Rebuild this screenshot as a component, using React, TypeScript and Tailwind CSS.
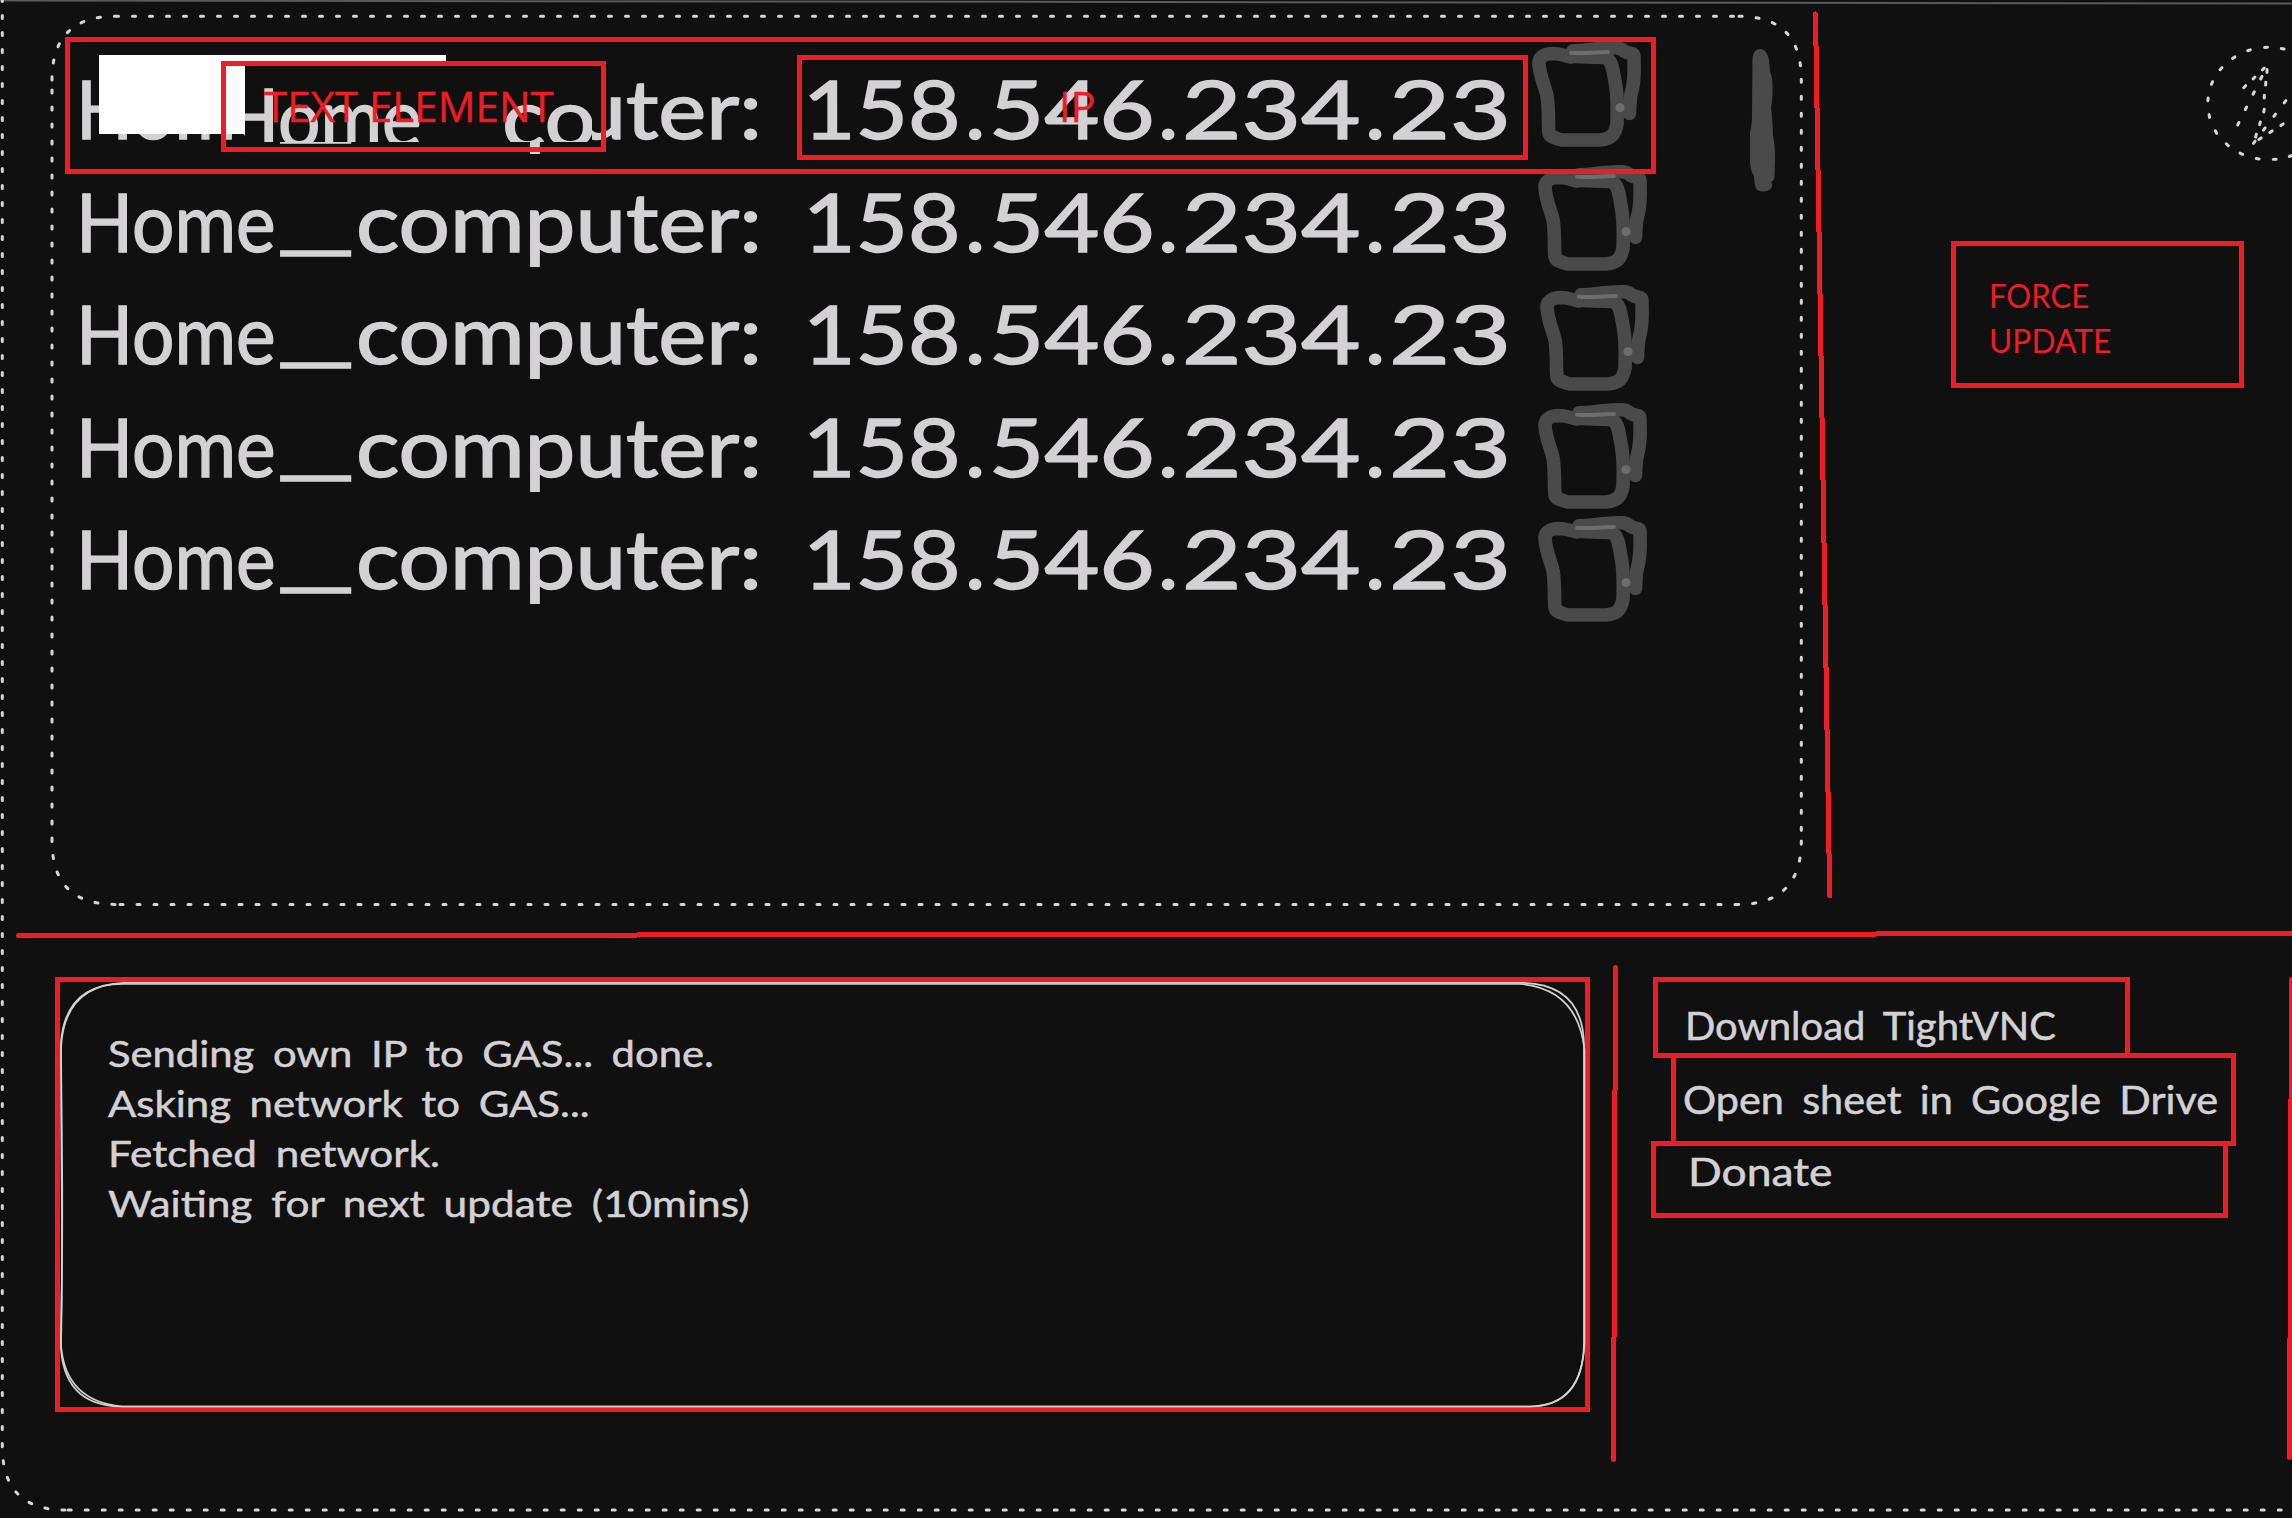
import { useLayoutEffect, useRef, useState } from "react";
import type { ReactNode } from "react";

/** Text stretched or squeezed horizontally so that it fills a given width. */
function Fit({ width, className = "", children }: { width: number; className?: string; children: ReactNode }) {
  const ref = useRef<HTMLSpanElement>(null);
  const [scale, setScale] = useState(1);
  useLayoutEffect(() => {
    if (ref.current) setScale(width / ref.current.offsetWidth);
  }, [width]);
  return (
    <span className={`block whitespace-pre ${className}`} style={{ width }}>
      <span ref={ref} className="inline-block origin-left" style={{ transform: `scaleX(${scale})` }}>
        {children}
      </span>
    </span>
  );
}

function HostName() {
  return (
    <span className="flex shrink-0">
      <Fit width={200}>Home</Fit>
      <Fit width={80}><span className="relative -top-2">_</span></Fit>
      <Fit width={406}>computer:</Fit>
    </span>
  );
}

const ipWidths = [158, 166, 179, 122];

function Address({ ip }: { ip: string }) {
  return (
    <span className="ml-[41px] flex w-[708px] shrink-0 justify-between">
      {ip.split(".").map((part, i) => (
        <span key={i} className="flex gap-1">
          {i > 0 && <Fit width={20}>.</Fit>}
          <Fit width={ipWidths[i]}>{part}</Fit>
        </span>
      ))}
    </span>
  );
}

function ScribbleBox({ shift }: { shift: string }) {
  return (
    <svg className={`h-[112px] w-[130px] shrink-0 overflow-visible ${shift}`} viewBox="1530 51 130 112" fill="none" strokeLinecap="round" strokeLinejoin="round">
      <g stroke="#4a4a4a" strokeWidth="13.6">
        <path d="M1571 57C1560 55 1562 53.500 1552 53.500C1543 54 1539 58 1539 63C1539.500 78 1547 90 1547.500 99C1549 112 1548 125 1549 133C1550 137 1555 138 1562 140L1600 140C1611 139 1615 135 1617 124C1617.500 110 1618 98 1615.500 84C1613 72 1613 60 1605 57.500C1595 57 1585 57.500 1571 56" />
        <path d="M1573 50.800C1590 50.500 1586 49 1600 48.500C1612 48 1618 46 1624 51C1630 55 1634 51 1634 57C1634 70 1635 76 1632.500 88C1629 100 1630 104 1629.500 113.500" />
      </g>
      <path d="M1571 52.700C1585 54 1592 52 1608 52" stroke="#6d6d6d" strokeWidth="4" />
      <ellipse cx="1620" cy="107.700" rx="4.600" ry="4.400" fill="#6d6d6d" />
    </svg>
  );
}

const hosts = [
  { ip: "158.546.234.23", shift: "" },
  { ip: "158.546.234.23", shift: "translate-x-[6px] translate-y-[11px]" },
  { ip: "158.546.234.23", shift: "translate-x-[8px] translate-y-[19px]" },
  { ip: "158.546.234.23", shift: "translate-x-[6px] translate-y-[24px]" },
  { ip: "158.546.234.23", shift: "translate-x-[6px] translate-y-[25px]" },
];

const log = [
  { text: "Sending own IP to GAS... done.", width: 606 },
  { text: "Asking network to GAS...", width: 482 },
  { text: "Fetched network.", width: 332 },
  { text: "Waiting for next update (10mins)", width: 642 },
];

// Dashes of the round button: x, y and direction in degrees.
const dashes: [number, number, number][] = [
  [2208, 99.3, 95], [2212, 83, 115], [2221, 68.7, 133], [2233.7, 57.7, 145], [2249, 50.3, 160], [2266, 47.3, 176], [2282.7, 48.7, 10],
  [2209.3, 116, 80], [2216, 132, 62], [2227.3, 144.7, 44], [2241.3, 153.7, 25], [2257.7, 158.7, 8], [2274.7, 159.3, 177], [2290.7, 156, 160],
  [2263.3, 69, 133], [2254, 78, 133], [2244.7, 86.7, 133],
  [2267, 71, 92], [2265.7, 83.7, 94], [2264.3, 96.7, 92], [2264, 110.7, 100], [2260, 123.3, 104], [2256, 135.7, 103],
  [2261.3, 77.7, 117], [2253.7, 93, 117], [2246, 108.3, 117], [2238.3, 123.7, 117],
  [2285, 101.7, 127], [2274.7, 115.3, 127], [2264.3, 129, 127], [2254.3, 142.3, 127],
  [2282, 124.7, 147], [2271, 131.7, 147], [2260, 138.7, 147],
];

function DashedButton() {
  return (
    <svg className="absolute top-[40px] left-[2200px] h-[128px] w-[92px]" viewBox="2200 40 92 128" stroke="#d6d6d6" strokeWidth="3" strokeLinecap="round">
      {dashes.map(([x, y, a], i) => {
        const dx = 1.4 * Math.cos((a * Math.PI) / 180);
        const dy = 1.4 * Math.sin((a * Math.PI) / 180);
        return <line key={i} x1={x - dx} y1={y - dy} x2={x + dx} y2={y + dy} />;
      })}
    </svg>
  );
}

export default function App() {
  return (
    <div className="relative flex h-[1518px] w-[2292px] flex-col overflow-hidden bg-[#101010] font-['Lato',sans-serif] text-[#d3d1d4]">
      <svg className="pointer-events-none absolute inset-0 h-full w-full" viewBox="0 0 2292 1518" fill="none">
        <path d="M0 0.500L760 1.500L2292 3.500" stroke="#5b5b5b" strokeWidth="2" />
        <path
          d="M2298.200 1510H65M65 1510Q2.300 1510 2.300 1446.500M2.300 1446.500V-20"
          stroke="#d6d6d6" strokeWidth="3" strokeLinecap="round" strokeDasharray="3 14"
        />
      </svg>

      <section className="flex h-[931px] shrink-0">
        <div className="relative mt-4 ml-[52px] h-[888px] w-[1749px] shrink-0 pt-[35px] pl-6">
          <svg className="pointer-events-none absolute inset-0 h-full w-full overflow-visible" viewBox="52 16 1749 888" fill="none" stroke="#d6d6d6" strokeWidth="3" strokeLinecap="round" strokeDasharray="3 14">
            <path d="M115.500 16.300H1738M1739 16.300Q1801.300 16.300 1801.300 79.300M1801.300 79.300V841M1801.300 841Q1801.300 904.400 1738 904.400M1738 904.400H115M115 904.400Q52 904.400 52 841M52 841V79M52 80Q52 16.300 115 16.300" />
          </svg>
          <ul className="text-[82px] leading-[112px] [-webkit-text-stroke:1.5px_#d3d1d4]">
            {hosts.map((host, i) => (
              <li key={i} className="relative flex h-[112.5px]">
                <HostName />
                {i === 0 && (
                  <>
                    <div className="absolute top-1 left-[23px] h-[79px] w-[347px] bg-white" />
                    <div className="absolute top-3 left-[169px] flex h-[79px] w-[347px] overflow-hidden bg-[#101010]" aria-hidden="true">
                      <div className="-mt-1 -ml-[23px]"><HostName /></div>
                    </div>
                  </>
                )}
                <Address ip={host.ip} />
                <div className="ml-[19px]"><ScribbleBox shift={host.shift} /></div>
              </li>
            ))}
          </ul>
          <svg className="absolute top-[33px] right-[25px] h-[143px] w-[28px]" viewBox="1748 49 28 143" fill="#4a4a4a">
            <path d="M1752.500 58Q1753 49 1761 49Q1767 50 1769 60L1770 72Q1773 76 1772.500 95Q1772 103 1771 108Q1772.500 118 1773 135Q1775 145 1775 160L1774.500 177Q1774 181 1771 182Q1774 187 1769 190Q1764 193 1757 190Q1754 185 1754 176Q1750 170 1750 160L1750 132Q1752 125 1752 115Z" />
          </svg>

          <div className="absolute top-[21px] left-[13px] h-[137px] w-[1591px] border-[5px] border-[#ee1c24]" />
          <div className="absolute top-[45px] left-[169px] h-[91px] w-[385px] border-[5px] border-[#ee1c24] pt-2 pl-[38px] font-['Open_Sans',sans-serif] text-[41.5px] leading-[64px] text-[#ee1c24] [-webkit-text-stroke:0.4px_#ee1c24]">
            <Fit width={290}>TEXT ELEMENT</Fit>
          </div>
          <div className="absolute top-[39px] left-[745px] flex h-[105px] w-[731px] justify-center border-[5px] border-[#ee1c24] pt-[14px] pr-[170px] font-['Open_Sans',sans-serif] text-[41.5px] leading-[64px] text-[#ee1c24] [-webkit-text-stroke:0.4px_#ee1c24]">
            <Fit width={37}>IP</Fit>
          </div>
        </div>

        <svg className="h-[900px] w-[40px] shrink-0 overflow-visible" viewBox="1801 0 40 900" shapeRendering="crispEdges">
          <path d="M1815.500 14L1829.700 896" stroke="#ee1c24" strokeWidth="5" strokeLinecap="round" />
        </svg>

        <button className="mt-[241px] ml-[110px] flex h-[147px] w-[293px] flex-col items-start border-[5px] border-[#ee1c24] pt-[27px] pl-[33px] text-[32px] leading-[45px] text-[#ee1c24]">
          <Fit width={100}>FORCE</Fit>
          <Fit width={122}>UPDATE</Fit>
        </button>
        <DashedButton />
      </section>

      <div className="flex h-[7px] shrink-0 items-start pl-4">
        <div className="mt-[2px] h-[5px] w-[621px] rounded-l-sm bg-[#ee1c24]" />
        <div className="mt-px h-[5px] w-[1239px] bg-[#ee1c24]" />
        <div className="h-[5px] flex-1 bg-[#ee1c24]" />
      </div>

      <section className="flex items-start">
        <div className="relative mt-[39px] ml-[55px] h-[435px] w-[1535px] shrink-0 border-[5px] border-[#ee1c24] pt-[46px] pl-12 text-[37px] leading-[50px]">
          <svg className="pointer-events-none absolute inset-0 h-full w-full overflow-visible" viewBox="60 982 1525 425" fill="none" stroke="#d3d1d4" strokeWidth="1.700">
            <path d="M124 982.800H1520Q1583.500 983 1584 1046V1343Q1583 1406 1530 1406.500H120Q62 1405 60.800 1343C61.500 1290 63 1250 62 1160L61 1048Q64 985 124 982.800" />
            <path d="M122 984H1520Q1578 989 1584.500 1050V1343Q1582 1406 1530 1406.500H122Q65 1401 61 1345C62 1300 62.500 1250 61.500 1160L61 1042Q66 984 122 984" />
          </svg>
          {log.map((line) => (
            <Fit key={line.text} width={line.width} className="[word-spacing:7px] [-webkit-text-stroke:0.5px_#d3d1d4]">{line.text}</Fit>
          ))}
        </div>

        <div className="mt-[27px] ml-[21px] flex shrink-0 flex-col">
          <div className="ml-[2px] h-[125px] w-[5px] rounded-t-sm bg-[#ee1c24]" />
          <div className="ml-px h-[247px] w-[5px] bg-[#ee1c24]" />
          <div className="h-[125px] w-[5px] rounded-b-sm bg-[#ee1c24]" />
        </div>

        <nav className="mt-[39px] ml-[33px] flex w-[585px] shrink-0 flex-col text-[38px] leading-[50px] [-webkit-text-stroke:0.5px_#d3d1d4]">
          <a className="ml-[2px] h-[81px] w-[477px] border-[5px] border-[#ee1c24] pt-[18px] pl-[27px]">
            <Fit width={371} className="[word-spacing:8px]">Download TightVNC</Fit>
          </a>
          <a className="-mt-[5px] ml-5 h-[93px] w-[565px] border-[5px] border-[#ee1c24] pt-4 pl-[7px]">
            <Fit width={535} className="[word-spacing:7px]">Open sheet in Google Drive</Fit>
          </a>
          <a className="-mt-[5px] h-[77px] w-[577px] border-[5px] border-[#ee1c24] pl-8">
            <Fit width={145}>Donate</Fit>
          </a>
        </nav>

        <div className="mt-[39px] ml-[51px] flex shrink-0 flex-col">
          <div className="ml-[2px] h-[122px] w-[5px] rounded-t-sm bg-[#ee1c24]" />
          <div className="ml-px h-[239px] w-[5px] bg-[#ee1c24]" />
          <div className="h-[122px] w-[5px] rounded-b-sm bg-[#ee1c24]" />
        </div>
      </section>
    </div>
  );
}
